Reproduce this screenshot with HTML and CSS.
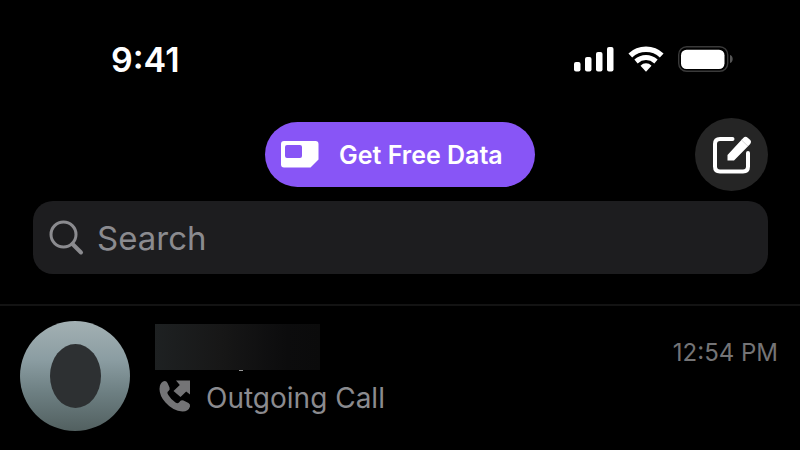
FILE: index.html
```
<!DOCTYPE html>
<html lang="en">
<head>
    <meta charset="UTF-8">
    <meta name="viewport" content="width=device-width, initial-scale=1.0">
    <title>Messages</title>
    <link rel="stylesheet" href="styles.css">
</head>
<body>
    <div class="status-bar">
        <time class="clock">9:41</time>
        <div class="status-icons">
            <svg width="40" height="26" viewBox="0 0 40 26" fill="#fff">
                <rect x="0" y="16" width="6.500" height="9.500" rx="2"/>
                <rect x="11" y="11" width="6.500" height="14.500" rx="2"/>
                <rect x="22" y="6" width="6.500" height="19.500" rx="2"/>
                <rect x="33" y="1" width="6.500" height="24.500" rx="2"/>
            </svg>
            <svg width="36" height="26" viewBox="0 0 36 26">
                <path d="M2.300 9.500C11 1.200 25 1.200 33.700 9.500" fill="none" stroke="#fff" stroke-width="5.400"/>
                <path d="M8 15.500C14 10.300 22 10.300 28 15.500" fill="none" stroke="#fff" stroke-width="5"/>
                <path d="M12.500 19.800C15.500 16.500 20.500 16.500 23.500 19.800L18 25.800Z" fill="#fff"/>
            </svg>
            <svg width="56" height="26" viewBox="0 0 56 26">
                <rect x=".7" y=".7" width="49" height="24.600" rx="8" fill="none" stroke="#3a3a3a" stroke-width="1.400"/>
                <rect x="3" y="3.700" width="43.500" height="19.300" rx="5.500" fill="#fff"/>
                <path d="M52 9c3.600 1 3.600 7 0 8z" fill="#555"/>
            </svg>
        </div>
    </div>

    <header class="toolbar">
        <button class="free-data" type="button">
            <svg width="38" height="27" viewBox="0 0 38 27">
                <path fill="#fff" fill-rule="evenodd" d="M3 0H34.500Q37.500 0 37.500 3V18.500L29.500 26.500H3Q0 26.500 0 23.500V3Q0 0 3 0ZM6 4Q4 4 4 6V15Q4 17 6 17H19Q21 17 21 15V6Q21 4 19 4Z"/>
            </svg>
            <span>Get Free Data</span>
        </button>
        <button class="compose" type="button" aria-label="Compose">
            <svg width="40" height="40" viewBox="0 0 40 40">
                <path d="M20.500 4H8Q3 4 3 9V31.500Q3 36.500 8 36.500H31Q36 36.500 36 31.500V18" fill="none" stroke="#fff" stroke-width="4" stroke-linecap="round"/>
                <path d="M15.500 25.500V20L31.200 3Q33.500 .8 35.700 2.800L38 4.800Q40 6.800 38 9.200L22 25.500Z" fill="#fff"/>
                <path d="M29.500 5L36 11.200" stroke="#ccc" stroke-width=".8"/>
            </svg>
        </button>
    </header>

    <label class="search">
        <svg width="36" height="36" viewBox="0 0 36 36" fill="none" stroke="#8b8b8f">
            <circle cx="14.500" cy="14.500" r="12.500" stroke-width="3"/>
            <path d="M23.500 24L32 32.500" stroke-width="4" stroke-linecap="round"/>
        </svg>
        <input type="text" placeholder="Search" aria-label="Search">
    </label>

    <main class="chats">
        <div class="chat">
            <div class="avatar"><div class="avatar-face"></div></div>
            <div class="chat-body">
                <div class="hidden-name"></div>
                <div class="call">
                    <svg width="32" height="32" viewBox="0 0 32 32" fill="#747476">
                        <path d="M4 1.500Q7 0 8.500 3L10.500 7.500Q11.300 9.500 9.500 11L8.500 12Q8 13 9.300 15Q12 19.500 16.500 22.500Q18.500 24 20 22.500L21.500 20.800Q22.500 19.800 24.500 20.500L29.500 23Q31.500 24 31 26.500Q29.500 31.500 23.500 31.500Q14 31 6.500 22.500Q.5 16 .5 9Q.5 3.500 4 1.500Z"/>
                        <path d="M17 .5H31V14.500L27.200 11.500L21.500 17L14.500 11L20.800 5Z"/>
                    </svg>
                    <span>Outgoing Call</span>
                </div>
            </div>
            <time class="chat-time">12:54 PM</time>
        </div>
    </main>
</body>
</html>
```

FILE: styles.css
```
* {
    box-sizing: border-box;
}
body {
    margin: 0;
    background: #000;
    color: #8b8b8f;
    font-family: Inter, "Liberation Sans", sans-serif;
}
svg {
    display: block;
    flex: none;
}
button {
    border: 0;
    padding: 0;
    font: inherit;
    cursor: pointer;
}
.status-bar {
    display: flex;
    justify-content: space-between;
    align-items: center;
    height: 118px;
    padding: 0 66px 0 111px;
    color: #fff;
}
.clock {
    font-size: 34px;
    font-weight: 600;
}
.status-icons {
    display: flex;
    gap: 14px;
}
.toolbar {
    display: grid;
    grid-template-columns: 1fr auto 1fr;
    align-items: center;
    padding: 0 32px;
}
.free-data {
    grid-column: 2;
    display: flex;
    align-items: center;
    gap: 20px;
    width: 270px;
    height: 65px;
    padding: 0 16px;
    border-radius: 33px;
    background: #8855f6;
    color: #fff;
    font-size: 25px;
    font-weight: 600;
    white-space: nowrap;
}
.compose {
    display: flex;
    align-items: center;
    justify-content: center;
    justify-self: end;
    width: 73px;
    height: 73px;
    border-radius: 50%;
    background: #252525;
}
.search {
    display: flex;
    align-items: center;
    gap: 12px;
    height: 73px;
    margin: 10px 32px 0 33px;
    padding: 0 16px;
    border-radius: 20px;
    background: #1d1d1f;
}
.search input {
    flex: 1;
    min-width: 0;
    padding: 0;
    border: 0;
    outline: 0;
    background: none;
    color: #fff;
    font: inherit;
    font-size: 33px;
}
.search input::placeholder {
    color: #8b8b8f;
    opacity: 1;
}
.chats {
    margin-top: 30px;
    border-top: 2px solid #131313;
}
.chat {
    display: flex;
    padding: 15px 22px 15px 20px;
}
.avatar {
    display: flex;
    align-items: center;
    justify-content: center;
    width: 110px;
    height: 110px;
    border-radius: 50%;
    background: linear-gradient(#a3b0b3, #8b9da2 35%, #6d7f82 65%, #526060);
}
.avatar-face {
    width: 51px;
    height: 64px;
    border-radius: 50%;
    background: #2d3032;
}
.chat-body {
    flex: 1;
    padding: 3px 0 0 25px;
}
.hidden-name {
    position: relative;
    width: 165px;
    height: 46px;
    background: linear-gradient(90deg, #1e2122, #171717 40%, #0c0c0d 80%, #0b0b0b);
}
/* descender peeking out below the cover */
.hidden-name::after {
    content: "";
    position: absolute;
    top: 100%;
    left: 84px;
    width: 4px;
    height: 1px;
    background: #999;
}
.call {
    display: flex;
    align-items: flex-start;
    gap: 15px;
    padding: 10px 0 0 4px;
    font-size: 28px;
    line-height: 36px;
}
.chat-time {
    padding-top: 17px;
    color: #747476;
    font-size: 24px;
}
```
